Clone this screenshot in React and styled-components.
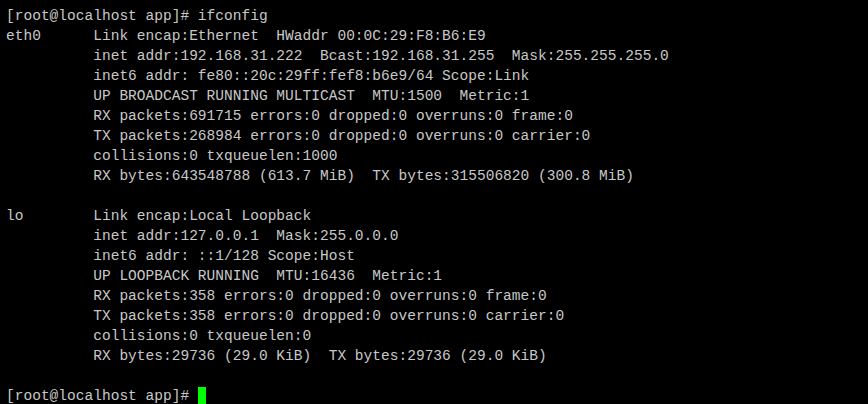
import styled, { createGlobalStyle } from 'styled-components';

const GlobalStyle = createGlobalStyle`
  html, body {
    margin: 0;
    padding: 0;
    background: #000;
    overflow: hidden;
  }
`;

const Terminal = styled.div`
  width: 868px;
  height: 404px;
  background: #000;
  color: #c8c8c8;
  font-family: 'Liberation Mono', 'Courier New', monospace;
  font-size: 14.5px;
  line-height: 20px;
  padding: 6px 0 0 6px;
  box-sizing: border-box;
  overflow: hidden;
`;

const Line = styled.div`
  white-space: pre;
  height: 20px;
  letter-spacing: 0.02px;
`;

const Cursor = styled.span`
  display: inline-block;
  width: 8px;
  height: 17px;
  background: #00ff00;
  vertical-align: -4px;
`;

const lines = [
  '[root@localhost app]# ifconfig',
  'eth0      Link encap:Ethernet  HWaddr 00:0C:29:F8:B6:E9',
  '          inet addr:192.168.31.222  Bcast:192.168.31.255  Mask:255.255.255.0',
  '          inet6 addr: fe80::20c:29ff:fef8:b6e9/64 Scope:Link',
  '          UP BROADCAST RUNNING MULTICAST  MTU:1500  Metric:1',
  '          RX packets:691715 errors:0 dropped:0 overruns:0 frame:0',
  '          TX packets:268984 errors:0 dropped:0 overruns:0 carrier:0',
  '          collisions:0 txqueuelen:1000',
  '          RX bytes:643548788 (613.7 MiB)  TX bytes:315506820 (300.8 MiB)',
  '',
  'lo        Link encap:Local Loopback',
  '          inet addr:127.0.0.1  Mask:255.0.0.0',
  '          inet6 addr: ::1/128 Scope:Host',
  '          UP LOOPBACK RUNNING  MTU:16436  Metric:1',
  '          RX packets:358 errors:0 dropped:0 overruns:0 frame:0',
  '          TX packets:358 errors:0 dropped:0 overruns:0 carrier:0',
  '          collisions:0 txqueuelen:0',
  '          RX bytes:29736 (29.0 KiB)  TX bytes:29736 (29.0 KiB)',
  '',
];

export default function App() {
  return (
    <>
      <GlobalStyle />
      <Terminal>
        {lines.map((l, i) => (
          <Line key={i}>{l}</Line>
        ))}
        <Line>
          {'[root@localhost app]# '}
          <Cursor />
        </Line>
      </Terminal>
    </>
  );
}
